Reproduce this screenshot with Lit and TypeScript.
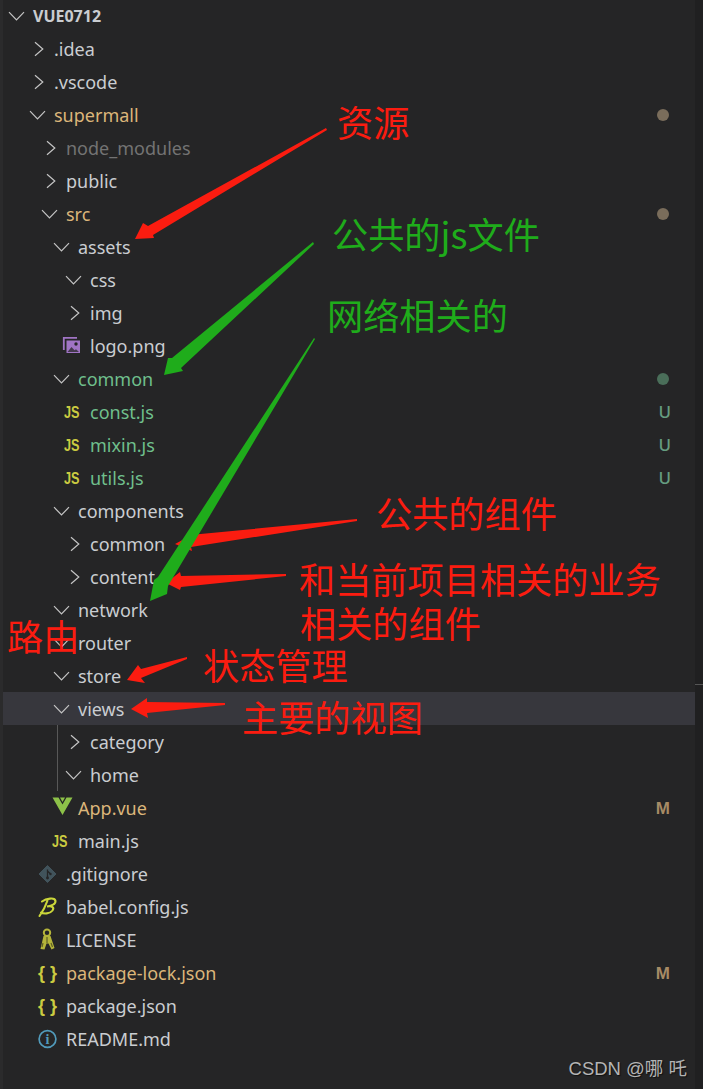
import { LitElement, html, css, svg } from "lit";
import { customElement } from "lit/decorators.js";

type Row = {
  label: string;
  depth: number;
  twist?: "open" | "closed";
  icon?: string;
  tone?: string;
  badge?: string;
  guide?: boolean;
  active?: boolean;
};

const rows: Row[] = [
  { label: "VUE0712", depth: 0, twist: "open", tone: "root" },
  { label: ".idea", depth: 1, twist: "closed" },
  { label: ".vscode", depth: 1, twist: "closed" },
  { label: "supermall", depth: 1, twist: "open", tone: "changed", badge: "dot" },
  { label: "node_modules", depth: 2, twist: "closed", tone: "ignored" },
  { label: "public", depth: 2, twist: "closed" },
  { label: "src", depth: 2, twist: "open", tone: "changed", badge: "dot" },
  { label: "assets", depth: 3, twist: "open" },
  { label: "css", depth: 4, twist: "open" },
  { label: "img", depth: 4, twist: "closed" },
  { label: "logo.png", depth: 4, icon: "image" },
  { label: "common", depth: 3, twist: "open", tone: "added", badge: "greendot" },
  { label: "const.js", depth: 4, icon: "js", tone: "added", badge: "U" },
  { label: "mixin.js", depth: 4, icon: "js", tone: "added", badge: "U" },
  { label: "utils.js", depth: 4, icon: "js", tone: "added", badge: "U" },
  { label: "components", depth: 3, twist: "open" },
  { label: "common", depth: 4, twist: "closed" },
  { label: "content", depth: 4, twist: "closed" },
  { label: "network", depth: 3, twist: "open" },
  { label: "router", depth: 3, twist: "open" },
  { label: "store", depth: 3, twist: "open" },
  { label: "views", depth: 3, twist: "open", active: true },
  { label: "category", depth: 4, twist: "closed", guide: true },
  { label: "home", depth: 4, twist: "open", guide: true },
  { label: "App.vue", depth: 3, icon: "vue", tone: "changed", badge: "M" },
  { label: "main.js", depth: 3, icon: "js" },
  { label: ".gitignore", depth: 2, icon: "git" },
  { label: "babel.config.js", depth: 2, icon: "babel" },
  { label: "LICENSE", depth: 2, icon: "key" },
  { label: "package-lock.json", depth: 2, icon: "braces", tone: "changed", badge: "M" },
  { label: "package.json", depth: 2, icon: "braces" },
  { label: "README.md", depth: 2, icon: "info" },
];

// hand annotations painted over the screenshot: [x, centre y, text, colour]
const notes: [number, number, string, string][] = [
  [337, 121, "资源", "red"],
  [332, 233, "公共的js文件", "green"],
  [327, 314, "网络相关的", "green"],
  [376, 512, "公共的组件", "red"],
  [299, 578, "和当前项目相关的业务", "red"],
  [300, 622, "相关的组件", "red"],
  [7, 635, "路由", "red"],
  [203, 664, "状态管理", "red"],
  [242, 716, "主要的视图", "red"],
];

const redArrows = [
  "326,128 327,130 153,235 154,238 135,239 143,223 148,226",
  "357,519 357,521 191,547 192,551 175,544 188,537 190,535",
  "286,574 286,576 181,587 180,590 166,583 180,572 181,576",
  "187,657 187,659 141,678 145,683 127,680 138,665 141,669",
  "225,703 225,705 147,713 148,718 131,709 147,698 147,702",
];

const greenArrows = [
  "313,242 314,244 181,368 183,371 164,375 168,358 172,358",
  "314,338 315,339 168,586 167,594 150,601 154,580 158,577",
];

const icons: Record<string, unknown> = {
  js: svg`<text x="4" y="17.500" font-family="Liberation Sans" font-weight="700" font-size="16" textLength="15.500" lengthAdjust="spacingAndGlyphs" fill="#cbcb41">JS</text>`,
  braces: svg`<text x="11.500" y="18" text-anchor="middle" font-family="Liberation Sans" font-weight="700" font-size="18" fill="#cbcb41">{ }</text>`,
  info: svg`<circle cx="11.500" cy="12" r="8.400" fill="none" stroke="#519aba" stroke-width="1.700"/><text x="11.500" y="17" text-anchor="middle" font-family="Liberation Serif" font-weight="700" font-size="14" fill="#519aba">i</text>`,
  git: svg`<path d="M11.500 3.500 20 12l-8.500 8.500L3 12z" fill="#41535b" stroke="#41535b" stroke-linejoin="round"/><path d="M11.500 7.500v9M11.500 9l3 3" stroke="#252526" stroke-width="1.300" fill="none"/><circle cx="11.500" cy="16" r="1.400" fill="#252526"/><circle cx="14.500" cy="12" r="1.200" fill="#252526"/>`,
  babel: svg`<path d="M6 6.500C10 3.500 19 2 19.500 6c.2 3-4 5-8.500 5.500 5.500-.8 7.500 1 5.500 4-2.500 3.500-9 3.500-11.500 2M11.500 5.500C10 10 7 16 3.500 21" fill="none" stroke="#cbd73a" stroke-width="2.100" stroke-linecap="round"/>`,
  key: svg`<circle cx="11" cy="4.800" r="3.200" fill="none" stroke="#b5b53a" stroke-width="2"/><path d="M7.500 8h7l4 12-3 1.500-3-6h-2l-2 6-4-.5z" fill="#b5b53a"/><path d="M11 9v6M7 15 6 19M15 15l1.500 4" stroke="#5f5f26" stroke-width="1.200" fill="none"/>`,
  vue: svg`<path d="M4.500 1.500h6l4 7 4-7h6L14.500 19z" fill="#8dc149"/><path d="M12 1.500h5l-2.500 4.500z" fill="#8dc149"/>`,
  image: svg`<path d="M17 3.800H3.800V16" fill="none" stroke="#a074c4" stroke-width="1.800"/><path d="M6.500 6.500H20V19H6.500z" fill="#a074c4"/><circle cx="16" cy="10" r="1.700" fill="#252526"/><path d="M7.500 18l4-5 3 3.200 1.500-1 3 2.800z" fill="#252526" opacity=".75"/>`,
};

const chevrons = {
  open: svg`<path d="M6 8.200 13.500 15.800 21 8.200" fill="none" stroke="#c5c5c5" stroke-width="1.200"/>`,
  closed: svg`<path d="M11 5.200 18.800 12 11 18.800" fill="none" stroke="#c5c5c5" stroke-width="1.200"/>`,
};

@customElement("app-root")
export class AppRoot extends LitElement {
  static styles = css`
    :host {
      display: block;
      position: relative;
      width: 703px;
      height: 1089px;
      overflow: hidden;
      background: #252526;
      font-family: "Noto Sans", "Noto Sans CJK SC", sans-serif;
    }
    .page {
      display: flex;
      height: 100%;
    }
    .edge {
      width: 3px;
      flex-shrink: 0;
      background: #2b2b2c;
    }
    .tree {
      flex: 1;
      margin-top: -1px;
    }
    .scroll {
      width: 8px;
      flex-shrink: 0;
      background: #202021;
      padding-top: 684px;
    }
    .tick {
      height: 1px;
      background: #555;
    }
    .row {
      position: relative;
      display: flex;
      align-items: center;
      height: 33px;
      padding-right: 25px;
      font-size: 18px;
      color: #cacdd1;
      white-space: nowrap;
    }
    .row.active {
      background: #37373d;
    }
    .row.guide::before {
      content: "";
      position: absolute;
      left: 54px;
      top: 0;
      bottom: 0;
      width: 1px;
      background: #585858;
    }
    .twist {
      width: 30px;
      height: 24px;
      flex-shrink: 0;
    }
    .label {
      flex: 1;
    }
    .root .label {
      font-weight: 700;
      font-size: 16px;
    }
    .changed .label {
      color: #dcb67a;
    }
    .ignored .label {
      color: #737373;
    }
    .added .label {
      color: #6fbf8c;
    }
    .dot {
      width: 12px;
      height: 12px;
      border-radius: 50%;
      margin-right: 1px;
      background: #7a6d5b;
    }
    .greendot {
      width: 12px;
      height: 12px;
      border-radius: 50%;
      margin-right: 1px;
      background: #4a6e59;
    }
    .letter-U {
      font-size: 17px;
      font-weight: 500;
      color: #659d80;
      margin-right: -1px;
    }
    .letter-M {
      font-family: "Liberation Sans", sans-serif;
      font-size: 17px;
      font-weight: 700;
      color: #a78b65;
      padding-top: 2px;
    }
    .ink {
      position: absolute;
      inset: 0;
      width: 703px;
      height: 1089px;
    }
    .note {
      position: absolute;
      transform: translateY(-50%);
      font-family: "Noto Sans CJK SC", sans-serif;
      font-size: 36.2px;
      line-height: 36px;
      white-space: nowrap;
    }
    .note.red {
      color: #fb1c10;
    }
    .note.green {
      color: #1fac1b;
    }
    .mark {
      position: absolute;
      right: 16px;
      bottom: 9px;
      font-family: "Liberation Sans", "Noto Sans CJK SC", sans-serif;
      font-size: 18.5px;
      color: #b4b4b4;
      text-shadow: 1px 1px 1px #111;
      white-space: nowrap;
    }
  `;

  private renderBadge(badge?: string) {
    if (!badge) return "";
    if (badge === "dot" || badge === "greendot") return html`<span class=${badge}></span>`;
    return html`<span class="letter-${badge}">${badge}</span>`;
  }

  private renderRow(row: Row) {
    const pad = row.depth ? 9 + 12 * row.depth : 0;
    const glyph = row.twist ? chevrons[row.twist] : icons[row.icon ?? ""];
    return html`
      <div
        class="row ${row.tone ?? ""} ${row.active ? "active" : ""} ${row.guide ? "guide" : ""}"
        style="padding-left:${pad}px">
        <svg class="twist" viewBox="0 0 30 24">${glyph}</svg>
        <span class="label">${row.label}</span>
        ${this.renderBadge(row.badge)}
      </div>
    `;
  }

  render() {
    return html`
      <div class="page">
        <div class="edge"></div>
        <div class="tree">${rows.map((row) => this.renderRow(row))}</div>
        <div class="scroll"><div class="tick"></div></div>
      </div>
      <svg class="ink" viewBox="0 0 703 1089">
        ${redArrows.map((p) => svg`<polygon points=${p} fill="#fb1c10" />`)}
        ${greenArrows.map((p) => svg`<polygon points=${p} fill="#1fac1b" />`)}
      </svg>
      ${notes.map(
        ([x, y, text, tone]) =>
          html`<div class="note ${tone}" style="left:${x}px;top:${y}px">${text}</div>`
      )}
      <div class="mark">CSDN @哪 吒</div>
    `;
  }
}
